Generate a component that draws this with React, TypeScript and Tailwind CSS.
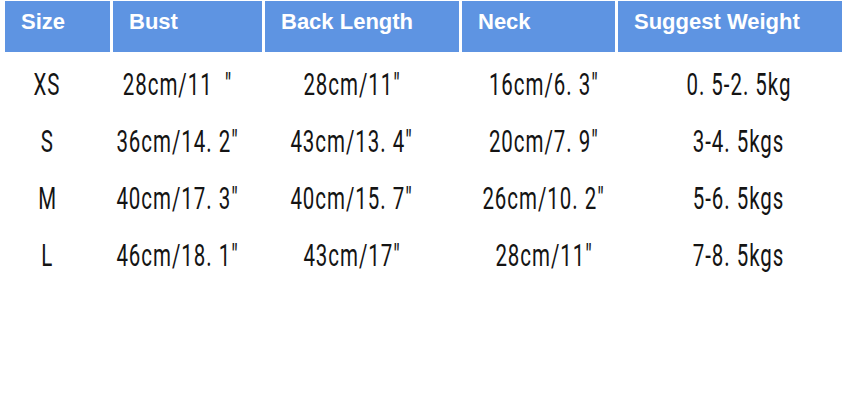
const columns = [
  { title: "Size", shift: "pr-[20px]" },
  { title: "Bust", shift: "pr-[19px]" },
  { title: "Back Length", shift: "pr-[20px]" },
  { title: "Neck", shift: "pl-[11px]" },
  { title: "Suggest Weight", shift: "pl-[18px]" },
];

const rows: string[][] = [
  ["XS", "28cm/11  \"", "28cm/11\"", "16cm/6. 3\"", "0. 5-2. 5kg"],
  ["S", "36cm/14. 2\"", "43cm/13. 4\"", "20cm/7. 9\"", "3-4. 5kgs"],
  ["M", "40cm/17. 3\"", "40cm/15. 7\"", "26cm/10. 2\"", "5-6. 5kgs"],
  ["L", "46cm/18. 1\"", "43cm/17\"", "28cm/11\"", "7-8. 5kgs"],
];

const gridCols = "grid grid-cols-[105px_149px_194px_153px_224px] gap-x-[3px] pl-[5px]";

export default function App() {
  return (
    <div className="w-[867px] h-[420px] bg-white overflow-hidden font-['Liberation_Sans',Arial,sans-serif]">
      {/* header */}
      <div className={`${gridCols} mt-px`}>
        {columns.map((c) => (
          <div key={c.title} className="h-[51px] bg-[#5e94e2] pl-4 pt-[10px]">
            <span className="block text-[22px] leading-none font-bold text-white">{c.title}</span>
          </div>
        ))}
      </div>

      {/* rows */}
      <div className="mt-[3px]">
        {rows.map((row, i) => (
          <div key={i} className={`${gridCols} h-[57px]`}>
            {row.map((cell, j) => (
              <div key={j} className={`flex items-center justify-center ${columns[j].shift}`}>
                <span className="inline-block whitespace-pre font-['Roboto',sans-serif] text-[32px] leading-none tracking-[1.5px] text-[#141414] scale-x-[0.64]">
                  {cell}
                </span>
              </div>
            ))}
          </div>
        ))}
      </div>
    </div>
  );
}
